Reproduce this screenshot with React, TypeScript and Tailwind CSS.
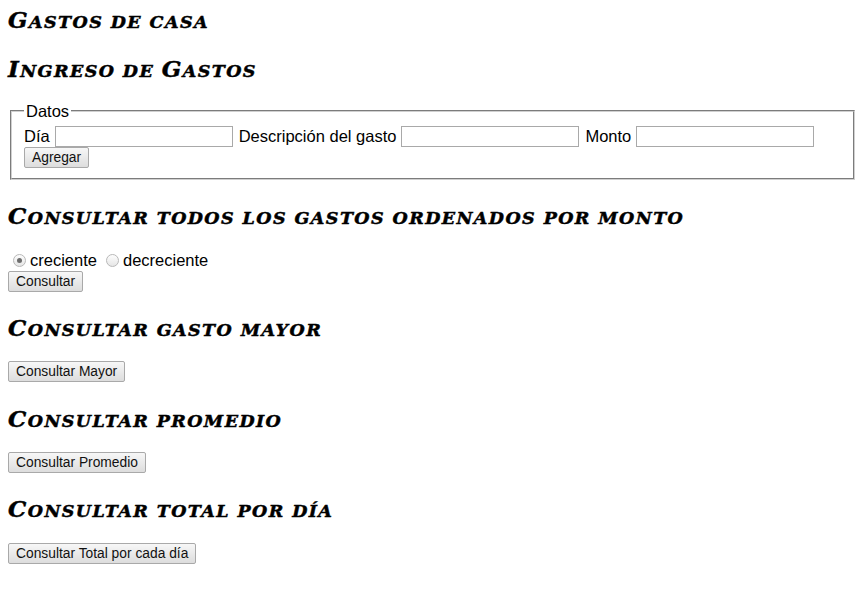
import React, { useState } from 'react';

// small caps built by hand: capitals big, the rest as smaller capitals
const SmallCaps = ({ text }: { text: string }) => (
  <>
    {text.split('').map((ch, i) =>
      ch !== ' ' && ch === ch.toUpperCase() && ch !== ch.toLowerCase() ? (
        <span key={i} className="text-[23px]">{ch}</span>
      ) : (
        <span key={i} className="text-[17.5px] uppercase">{ch}</span>
      )
    )}
  </>
);

const Heading = ({ text, className = '' }: { text: string; className?: string }) => (
  <h2
    className={`font-['DejaVu_Serif',serif] font-bold italic tracking-[1.4px] leading-[28px] h-[28px] text-black [-webkit-text-stroke:0.5px_black] ${className}`}
  >
    <SmallCaps text={text} />
  </h2>
);

const Btn = ({ children, className = '' }: { children: React.ReactNode; className?: string }) => (
  <button
    type="button"
    className={`block h-[21px] px-[7px] border border-[#a9a9a9] rounded-[2px] bg-gradient-to-b from-[#f7f7f7] to-[#dddddd] text-[13.8px] leading-[16px] text-[#111] font-['Liberation_Sans',Arial,sans-serif] ${className}`}
  >
    {children}
  </button>
);

const TextBox = () => (
  <input
    type="text"
    className="w-[178px] h-[21px] border border-[#a9a9a9] bg-white px-[2px] text-[13.33px] outline-none"
  />
);

const Radio = ({ checked, onClick }: { checked: boolean; onClick: () => void }) => (
  <span
    onClick={onClick}
    className="inline-flex items-center justify-center w-[13px] h-[13px] rounded-full border border-[#b8b8b8] bg-gradient-to-b from-[#fdfdfd] to-[#e6e6e6] cursor-default"
  >
    {checked && <span className="w-[5px] h-[5px] rounded-full bg-[#6d6d6d]" />}
  </span>
);

const App = () => {
  const [order, setOrder] = useState('creciente');

  return (
    <div className="min-h-screen bg-white px-2 pt-[6px] font-['Liberation_Sans',Arial,sans-serif] text-[16.5px] text-black">
      <Heading text="Gastos de casa" />
      <Heading text="Ingreso de Gastos" className="mt-[21px]" />

      {/* Datos */}
      <fieldset className="mx-[2px] mt-[19px] border-2 [border-style:groove] border-[#d0d0d0] px-3 pb-[10px] pt-[5px]">
        <legend className="px-[2px] leading-[18px]">Datos</legend>
        <div className="flex items-center gap-[5px] h-[22px]">
          <span>Día</span>
          <TextBox />
          <span className="ml-[1px]">Descripción del gasto</span>
          <TextBox />
          <span className="ml-[1px]">Monto</span>
          <TextBox />
        </div>
        <Btn>Agregar</Btn>
      </fieldset>

      <Heading text="Consultar todos los gastos ordenados por monto" className="mt-[22px]" />
      <div className="mt-[21px] flex items-center h-[18px]">
        <span className="ml-[5px] mr-[4px] flex">
          <Radio checked={order === 'creciente'} onClick={() => setOrder('creciente')} />
        </span>
        <span>creciente</span>
        <span className="ml-[9px] mr-[4px] flex">
          <Radio checked={order === 'decreciente'} onClick={() => setOrder('decreciente')} />
        </span>
        <span>decreciente</span>
      </div>
      <Btn className="mt-[2px]">Consultar</Btn>

      <Heading text="Consultar gasto mayor" className="mt-[22px]" />
      <Btn className="mt-[19px]">Consultar Mayor</Btn>

      <Heading text="Consultar promedio" className="mt-[23px]" />
      <Btn className="mt-[19px]">Consultar Promedio</Btn>

      <Heading text="Consultar total por día" className="mt-[22px]" />
      <Btn className="mt-[20px]">Consultar Total por cada día</Btn>
    </div>
  );
};

export default App;
